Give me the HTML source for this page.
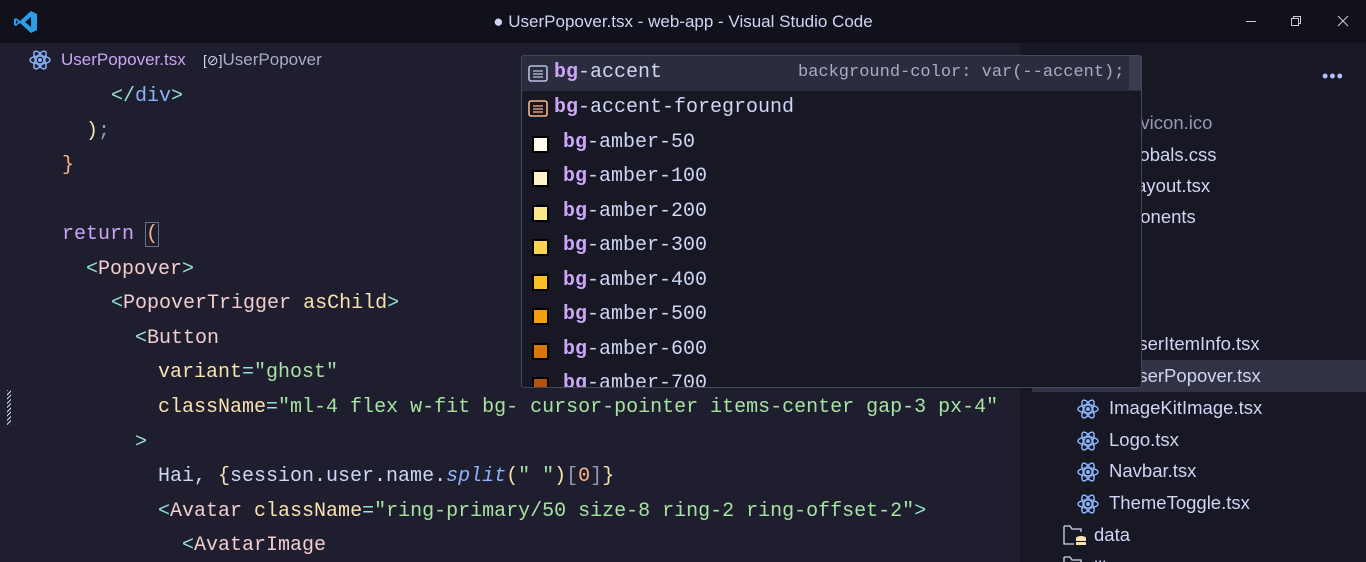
<!DOCTYPE html>
<html><head><meta charset="utf-8"><style>
*{margin:0;padding:0;box-sizing:border-box}
html,body{width:1366px;height:562px;overflow:hidden}
body{background:#1e1e2e;position:relative;font-family:"Liberation Sans",sans-serif}
.title{position:absolute;left:0;top:0;width:1366px;height:43px;background:#11111b;color:#cdd6f4;font-size:17px;text-align:center;line-height:43px}
.bc{position:absolute;left:0;top:43px;width:1020px;height:34px;background:#1e1e2e;font-size:17px;line-height:34px}
.code{position:absolute;left:0;top:79px;width:1020px;font-family:"Liberation Mono",monospace;font-size:20px;color:#cdd6f4}
.ln{position:absolute;white-space:pre;height:34px;line-height:34px}
.k{color:#cba6f7}.t{color:#94e2d5}.tn{color:#89b4fa}.c{color:#f2cdcd}.a{color:#f9e2af}.s{color:#a6e3a1}.p{color:#9399b2}.o{color:#fab387}.y{color:#f9e2af}
.side{position:absolute;left:1020px;top:43px;width:346px;height:519px;background:#181825;overflow:hidden}
.it{position:absolute;font-size:18.5px;color:#cdd6f4;white-space:nowrap;height:32px;line-height:32px}
.pop{position:absolute;left:521px;top:55px;width:621px;height:333px;background:#181825;border:1px solid #45475a;border-radius:3px;overflow:hidden;font-family:"Liberation Mono",monospace;font-size:20px;color:#cdd6f4}
.row{position:absolute;left:0;width:619px;height:34.5px;line-height:34.5px;white-space:pre}
.row b{color:#cba6f7}
.sq{position:absolute;left:10px;top:10px;width:17px;height:17px;border:2px solid #000}
</style></head><body>
<div class="title">
<svg style="position:absolute;left:14px;top:10px" width="24" height="24" viewBox="0 0 24 24"><path d="M17 1 L23 4 V20 L17 23 L6 13 L2 16 L0 15 V9 L2 8 L6 11 Z M17 7 L11 12 L17 17 Z M2 10 V14 L4 12 Z" fill="#2a9ee8"/></svg>
● UserPopover.tsx - web-app - Visual Studio Code
<svg style="position:absolute;left:1245px;top:14px" width="110" height="16"><line x1="1" y1="7.5" x2="11" y2="7.5" stroke="#ccc"/><rect x="46.5" y="4.5" width="7" height="7" fill="none" stroke="#ccc"/><path d="M48.5 4.5V2.5H55.5V9.5H53.5" fill="none" stroke="#ccc"/><path d="M93 2L103 12M103 2L93 12" stroke="#ccc"/></svg>
</div>
<div class="bc">
<svg style="position:absolute;left:29px;top:7px" width="22" height="20" viewBox="-11 -10 22 20"><g fill="none" stroke="#89b4fa" stroke-width="1.5"><ellipse rx="10" ry="4"/><ellipse rx="10" ry="4" transform="rotate(60)"/><ellipse rx="10" ry="4" transform="rotate(120)"/></g><circle r="2" fill="#89b4fa"/></svg>
<span style="position:absolute;left:61px;color:#cba6f7">UserPopover.tsx</span>
<span style="position:absolute;left:203px;color:#a6adc8"><span style="font-size:14px;color:#cdd6f4">[⊘]</span>UserPopover</span>
</div>
<div class="code">
<div class="ln" style="top:1px;left:111px"><span class="t">&lt;/</span><span class="tn">div</span><span class="t">&gt;</span></div>
<div class="ln" style="top:36px;left:86px"><span class="y">)</span><span class="p">;</span></div>
<div class="ln" style="top:70px;left:62px"><span class="o">}</span></div>
<div class="ln" style="top:139px;left:62px"><span class="k">return</span> <span class="o" style="outline:1px solid #6c7086">(</span></div>
<div class="ln" style="top:174px;left:86px"><span class="t">&lt;</span><span class="c">Popover</span><span class="t">&gt;</span></div>
<div class="ln" style="top:208px;left:111px"><span class="t">&lt;</span><span class="c">PopoverTrigger</span> <span class="a">asChild</span><span class="t">&gt;</span></div>
<div class="ln" style="top:243px;left:135px"><span class="t">&lt;</span><span class="c">Button</span></div>
<div class="ln" style="top:277px;left:158px"><span class="a">variant</span><span class="t">=</span><span class="s">"ghost"</span></div>
<div class="ln" style="top:312px;left:158px"><span class="a">className</span><span class="t">=</span><span class="s">"ml-4 flex w-fit bg- cursor-pointer items-center gap-3 px-4"</span></div>
<div class="ln" style="top:347px;left:135px"><span class="t">&gt;</span></div>
<div class="ln" style="top:381px;left:158px">Hai, <span class="y">{</span>session.user.name.<i class="tn">split</i><span class="y">(</span><span class="s">" "</span><span class="y">)</span><span class="p">[</span><span class="o">0</span><span class="p">]</span><span class="y">}</span></div>
<div class="ln" style="top:416px;left:158px"><span class="t">&lt;</span><span class="c">Avatar</span> <span class="a">className</span><span class="t">=</span><span class="s">"ring-primary/50 size-8 ring-2 ring-offset-2"</span><span class="t">&gt;</span></div>
<div class="ln" style="top:450px;left:182px"><span class="t">&lt;</span><span class="c">AvatarImage</span></div>
</div>
<div style="position:absolute;left:7px;top:390px;width:4px;height:35px;background:repeating-linear-gradient(135deg,#cdd6f4 0 1px,transparent 1px 3px)"></div>
<div class="side">
<div style="position:absolute;left:302px;top:23px;color:#b4befe;font-size:18px;letter-spacing:1px">•••</div>
<div class="it" style="top:64px;left:105px;color:#9399b2">favicon.ico</div>
<div class="it" style="top:96px;left:105px">globals.css</div>
<div class="it" style="top:127px;left:112px">layout.tsx</div>
<div class="it" style="top:158px;left:75px">components</div>
<div class="it" style="top:190px;left:110px">n</div>
<div class="it" style="top:252px;left:110px">.</div>
<div style="position:absolute;left:12px;top:317px;width:334px;height:32px;background:#313244"></div>
<div class="it" style="top:285px;left:105px">UserItemInfo.tsx</div>
<div class="it" style="top:317px;left:105px">UserPopover.tsx</div>
<div class="it" style="top:349px;left:89px">ImageKitImage.tsx</div>
<div class="it" style="top:381px;left:89px">Logo.tsx</div>
<div class="it" style="top:412px;left:89px">Navbar.tsx</div>
<div class="it" style="top:444px;left:89px">ThemeToggle.tsx</div>
<div class="it" style="top:476px;left:74px">data</div>
<div class="it" style="top:506px;left:74px;top:509px">lib</div>
<svg style="position:absolute;left:56px;top:355px" width="26" height="120" viewBox="0 0 26 120"><defs><g id="r"><g fill="none" stroke="#89b4fa" stroke-width="1.5"><ellipse rx="10" ry="4"/><ellipse rx="10" ry="4" transform="rotate(60)"/><ellipse rx="10" ry="4" transform="rotate(120)"/></g><circle r="2" fill="#89b4fa"/></g></defs><use href="#r" x="12" y="11"/><use href="#r" x="12" y="43"/><use href="#r" x="12" y="74"/><use href="#r" x="12" y="106"/></svg>
<svg style="position:absolute;left:42px;top:480px" width="28" height="26"><path d="M2 3H8L10 6H19V9M2 3V21H12" fill="none" stroke="#cdd6f4" stroke-width="1.3"/><ellipse cx="19" cy="15" rx="5" ry="2" fill="#f9e2af"/><rect x="14" y="15" width="10" height="7" fill="#f9e2af"/><path d="M14 18.5H24" stroke="#181825"/></svg>
<svg style="position:absolute;left:42px;top:511px" width="28" height="26"><path d="M2 3H8L10 6H19V12M2 3V21H20" fill="none" stroke="#cdd6f4" stroke-width="1.3"/></svg>
</div>
<div class="pop">
<div class="row" style="top:0;background:#2b2c3e"><svg style="position:absolute;left:6px;top:9px" width="20" height="17"><rect x="1" y="1" width="18" height="15" rx="2" fill="none" stroke="#bac2de" stroke-width="1.6"/><path d="M5 6H15M5 9H15M5 12H15" stroke="#bac2de" stroke-width="1.3"/></svg><span style="position:absolute;left:32px"><b>bg</b>-accent</span><span style="position:absolute;left:276px;color:#a6adc8;font-size:17px">background-color: var(--accent);</span><div style="position:absolute;left:607px;top:0;width:12px;height:34px;background:#3b3c50"></div></div>
<div class="row" style="top:35px"><svg style="position:absolute;left:6px;top:9px" width="20" height="17"><rect x="1" y="1" width="18" height="15" rx="2" fill="none" stroke="#fab387" stroke-width="1.6"/><path d="M5 6H15M5 9H15M5 12H15" stroke="#fab387" stroke-width="1.3"/></svg><span style="position:absolute;left:32px"><b>bg</b>-accent-foreground</span></div>
<div class="row" style="top:69.5px"><div class="sq" style="background:#fffbeb"></div><span style="position:absolute;left:41px"><b>bg</b>-amber-50</span></div>
<div class="row" style="top:104px"><div class="sq" style="background:#fef3c7"></div><span style="position:absolute;left:41px"><b>bg</b>-amber-100</span></div>
<div class="row" style="top:138.5px"><div class="sq" style="background:#fde68a"></div><span style="position:absolute;left:41px"><b>bg</b>-amber-200</span></div>
<div class="row" style="top:173px"><div class="sq" style="background:#fcd34d"></div><span style="position:absolute;left:41px"><b>bg</b>-amber-300</span></div>
<div class="row" style="top:207.5px"><div class="sq" style="background:#fbbf24"></div><span style="position:absolute;left:41px"><b>bg</b>-amber-400</span></div>
<div class="row" style="top:242px"><div class="sq" style="background:#f59e0b"></div><span style="position:absolute;left:41px"><b>bg</b>-amber-500</span></div>
<div class="row" style="top:276.5px"><div class="sq" style="background:#d97706"></div><span style="position:absolute;left:41px"><b>bg</b>-amber-600</span></div>
<div class="row" style="top:311px"><div class="sq" style="background:#b45309"></div><span style="position:absolute;left:41px"><b>bg</b>-amber-700</span></div>
</div>
</body></html>
